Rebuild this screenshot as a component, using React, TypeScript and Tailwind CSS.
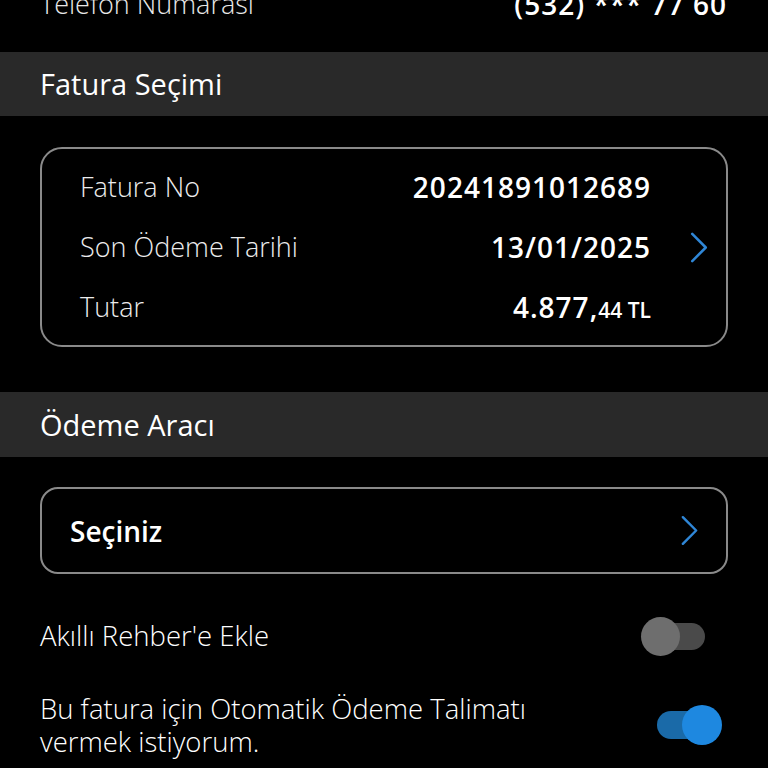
const font = { fontFamily: '"Open Sans", "Noto Sans", sans-serif' };

function Chevron({ className = '' }: { className?: string }) {
  return (
    <svg viewBox="0 0 20 32" className={className} fill="none" stroke="#2f86d6" strokeWidth={2.6} strokeLinecap="round" strokeLinejoin="round">
      <path d="M3 2 L17 16 L3 30" />
    </svg>
  );
}

function Toggle({ on }: { on: boolean }) {
  if (on) {
    return (
      <div className="relative w-[57px] h-[28px] rounded-full bg-[#1a6aa8]">
        <div className="absolute left-[25px] -top-[6px] w-[40px] h-[40px] rounded-full bg-[#1e88e0]" />
      </div>
    );
  }
  return (
    <div className="relative w-[57px] h-[27px] rounded-full bg-[#4a4a4a]">
      <div className="absolute -left-[7px] -top-[6px] w-[39px] h-[39px] rounded-full bg-[#6e6e6e]" />
    </div>
  );
}

const invoice = [
  { label: 'Fatura No', value: '20241891012689' },
  { label: 'Son Ödeme Tarihi', value: '13/01/2025', chevron: true },
  { label: 'Tutar', value: '4.877,', small: '44 TL' },
];

export default function App() {
  return (
    <div className="w-[768px] h-[768px] bg-black text-white overflow-hidden" style={font}>
      {/* cut-off phone row */}
      <div className="h-[52px] px-10 flex justify-between items-start">
        <span className="-mt-[16px] text-[27px] font-light text-[#e8e8e8]">Telefon Numarası</span>
        <span className="-mt-[17px] text-[28px] font-semibold tracking-[1px] mr-[1px]">(532) *** 77 60</span>
      </div>

      <div className="h-[64px] bg-[#292929] px-10 flex items-center text-[29px]">Fatura Seçimi</div>

      <div className="pt-[31px] px-10">
        <div className="border-2 border-[#8a8a8a] rounded-[22px] py-2 pl-[38px]">
          {invoice.map(row => (
            <div key={row.label} className="h-[60px] flex items-center">
              <span className="flex-1 text-[27px] font-light text-[#ececec]">{row.label}</span>
              <span className="text-[28px] font-semibold tracking-[1px]">
                {row.value}
                {row.small && <span className="text-[21px] tracking-normal">{row.small}</span>}
              </span>
              <div className="w-[75px] flex justify-end pr-[17px]">
                {row.chevron && <Chevron className="w-[20px] h-[31px]" />}
              </div>
            </div>
          ))}
        </div>
      </div>

      <div className="mt-[45px] h-[65px] bg-[#292929] px-10 flex items-center text-[29px]">Ödeme Aracı</div>

      <div className="pt-[30px] px-10">
        <div className="h-[87px] border-2 border-[#8a8a8a] rounded-[18px] pl-[28px] pr-[27px] flex items-center justify-between">
          <span className="text-[28px] font-semibold">Seçiniz</span>
          <Chevron className="w-[19px] h-[33px]" />
        </div>
      </div>

      <div className="mt-[32px] h-[60px] pl-10 pr-[63px] flex items-center justify-between">
        <span className="text-[27.5px] font-light">Akıllı Rehber'e Ekle</span>
        <Toggle on={false} />
      </div>

      <div className="mt-[26px] pl-10 pr-[54px] flex items-center justify-between">
        <p className="text-[27.5px] font-light leading-[33px]">
          Bu fatura için Otomatik Ödeme Talimatı
          <br />
          vermek istiyorum.
        </p>
        <Toggle on />
      </div>
    </div>
  );
}
